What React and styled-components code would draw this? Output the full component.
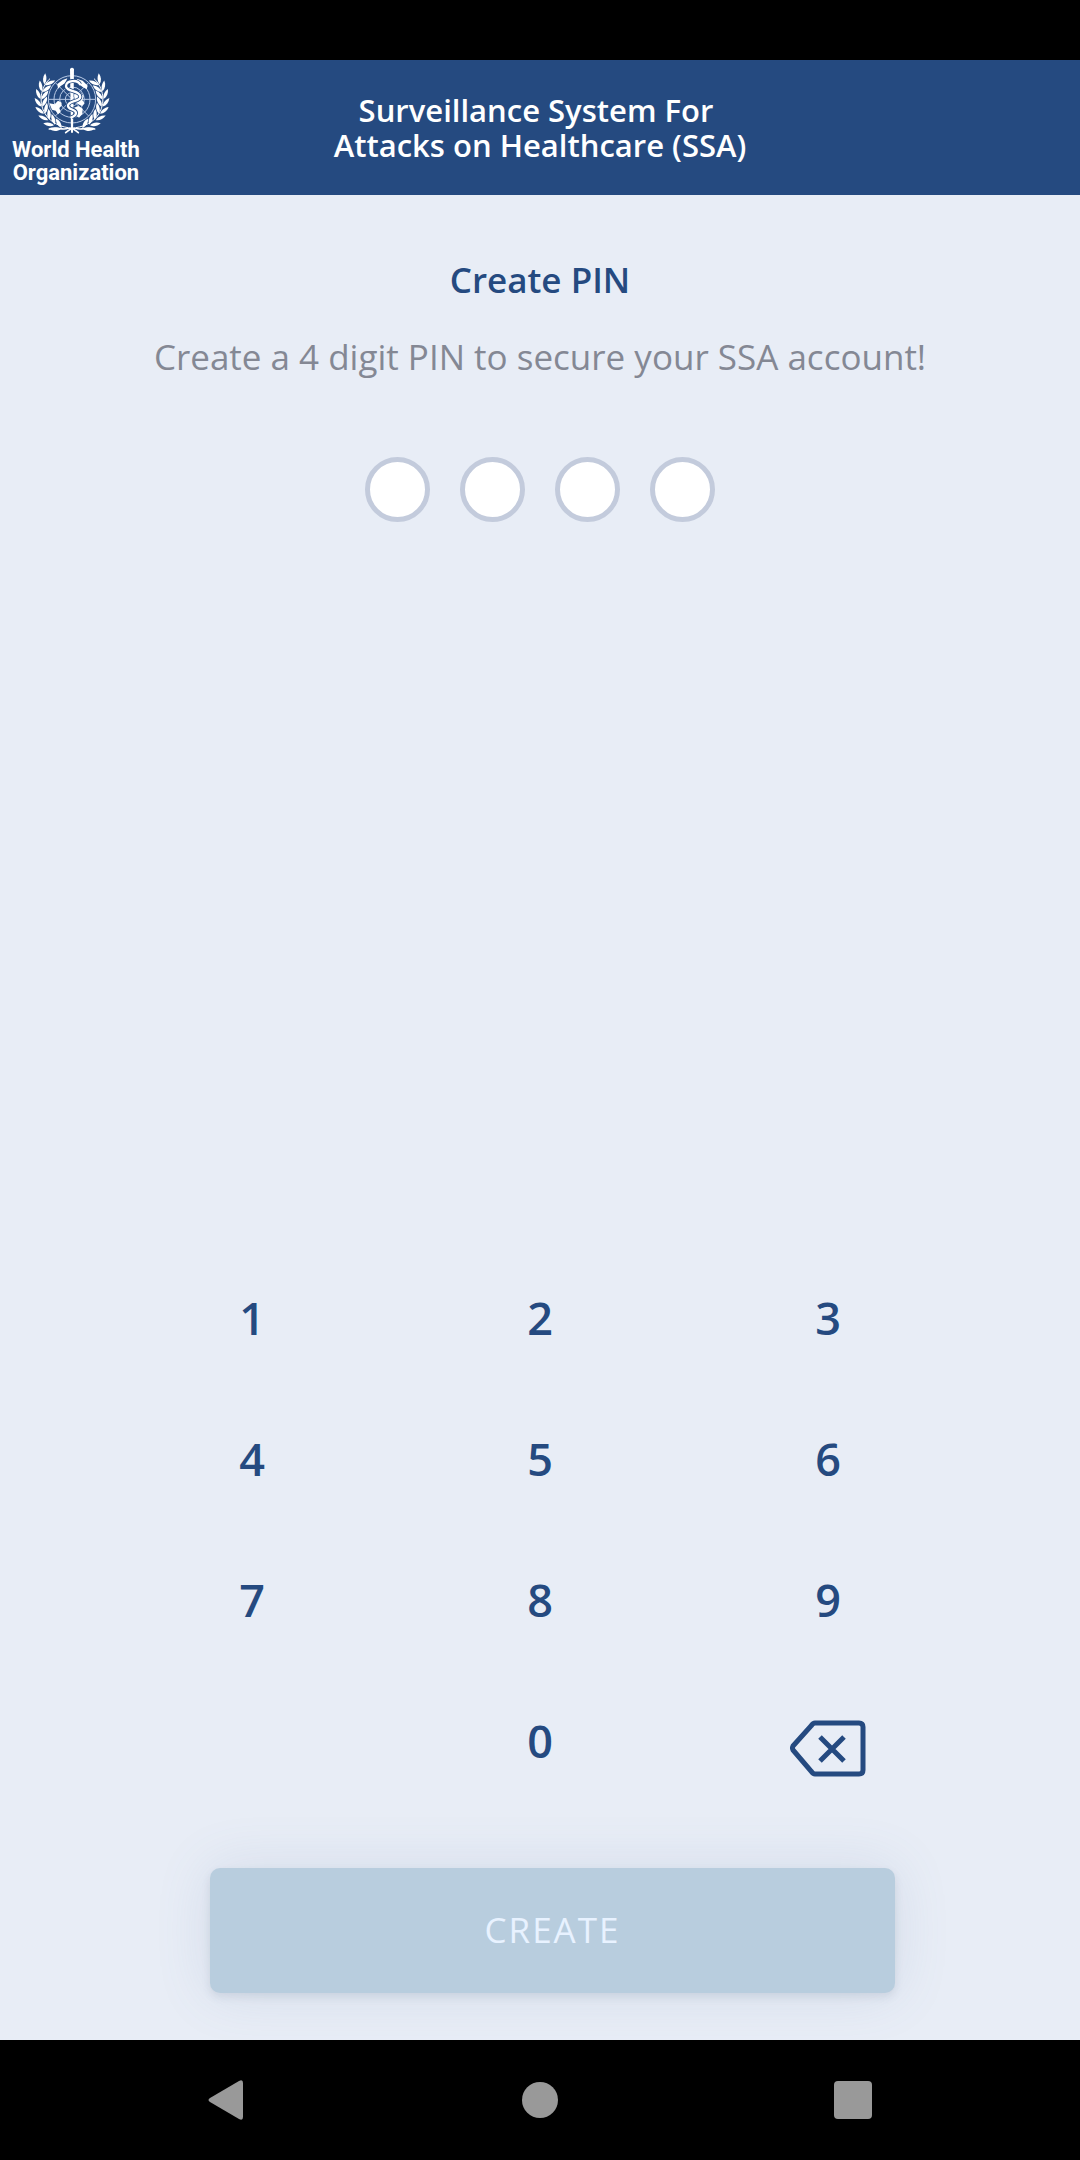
import React, { useState } from "react";
import styled, { createGlobalStyle } from "styled-components";

const colors = {
    darkblue: "#254a80",
    background: "#e8edf6",
    grey: "#848894",
    ring: "#c3cbdc",
    button: "#b8cdde",
    nav: "#999999"
};

const PIN_LENGTH = 4;
const DIGITS = ["1", "2", "3", "4", "5", "6", "7", "8", "9", "0"];

const GlobalStyle = createGlobalStyle`
    * {
        box-sizing: border-box;
    }

    body {
        margin: 0;
        font-family: "Open Sans", "Noto Sans", sans-serif;
    }
`;

const StyledScreen = styled.div`
    display: flex;
    flex-direction: column;
    min-height: 100vh;
    background: ${colors.background};
`;

const StyledStatusBar = styled.div`
    height: 60px;
    background: #000;
`;

const StyledHeader = styled.header`
    display: grid;
    grid-template-columns: 1fr auto 1fr;
    align-items: center;
    min-height: 135px;
    padding: 0 12px;
    background: ${colors.darkblue};
    color: #fff;
`;

const StyledLogo = styled.div`
    display: flex;
    flex-direction: column;
    align-items: center;
    justify-self: start;
    padding-bottom: 5px;
`;

const StyledEmblem = styled.svg`
    width: 78px;
    height: 68px;
    margin: 0 8px 4px 0;
`;

const StyledLogoText = styled.span`
    font-family: Roboto, "Liberation Sans", sans-serif;
    font-size: 22px;
    font-weight: 700;
    line-height: 23px;
    white-space: nowrap;
`;

const StyledTitle = styled.h1`
    margin: 0;
    font-size: 31px;
    font-weight: 600;
    line-height: 35px;
    text-align: center;
    white-space: pre;
`;

const StyledMain = styled.main`
    display: flex;
    flex: 1;
    flex-direction: column;
    align-items: center;
    padding: 61px 0 47px;
`;

const StyledHeading = styled.h2`
    margin: 0 0 29px;
    color: ${colors.darkblue};
    font-size: 35px;
    font-weight: 600;
    line-height: 48px;
`;

const StyledHint = styled.p`
    margin: 0 0 76px;
    color: ${colors.grey};
    font-size: 35px;
    line-height: 48px;
    text-align: center;
`;

const StyledPin = styled.div`
    display: flex;
    gap: 30px;
`;

const StyledPinBox = styled.input`
    width: 65px;
    height: 65px;
    padding: 0;
    border: 5px solid ${colors.ring};
    border-radius: 50%;
    outline: none;
    background: #fff;
    color: ${colors.darkblue};
    font-size: 35px;
    text-align: center;
`;

const StyledKeypad = styled.div`
    display: grid;
    grid-template-columns: repeat(3, 1fr);
    grid-auto-rows: 141px;
    width: 80%;
    margin-top: auto;
`;

const StyledKey = styled.button`
    display: flex;
    align-items: center;
    justify-content: center;
    grid-column: ${({ $column }) => $column || "auto"};
    padding: ${({ $icon }) => ($icon ? "16px 0 0" : "0")};
    border: none;
    background: none;
    color: ${colors.darkblue};
    font-family: inherit;
    font-size: 45px;
    font-weight: 600;
    cursor: pointer;
`;

const StyledCreateButton = styled.button`
    width: 685px;
    max-width: 80%;
    height: 125px;
    margin: 57px 0 0 25px;
    padding: 0 0 2px;
    border: none;
    border-radius: 10px;
    background: ${colors.button};
    box-shadow: 0 4px 8px rgba(60, 80, 110, 0.12), 0 0 56px rgba(90, 120, 160, 0.14);
    color: #e8f2ff;
    font-family: inherit;
    font-size: 35px;
    letter-spacing: 2px;
`;

const StyledNavBar = styled.nav`
    display: grid;
    grid-template-columns: repeat(3, 1fr);
    height: 120px;
    padding: 0 71px;
    background: #000;
`;

const StyledNavButton = styled.button`
    display: flex;
    align-items: center;
    justify-content: center;
    padding: 0;
    border: none;
    background: none;
    color: ${colors.nav};
`;

const leafAngles = [-62, -48, -34, -20, -6, 8, 22, 36];

const snake = "M242 101C235 86 201 88 200 106C199 124 243 119 243 138C243 154 206 149 206 165C206 179 230 174 230 187C230 195 222 197 217 200";

function Wreath() {
    return (
        <g>
            <path d="M152 84C124 108 114 160 142 196C156 214 176 226 206 231" fill="none" stroke="#fff" strokeWidth="3" />
            {leafAngles.map(angle => (
                <g key={angle} transform={`rotate(${angle} 218 146)`}>
                    <path d="M124 158C113 153 107 143 107 130C118 136 125 146 124 158Z" fill="#fff" />
                    <path d="M127 159C126 147 132 137 144 130C145 143 139 153 127 159Z" fill="#fff" />
                </g>
            ))}
        </g>
    );
}

function Emblem() {
    return (
        <StyledEmblem viewBox="101 46 234 204" aria-hidden="true">
            <g fill="none" stroke="#b9cae6" strokeWidth="3">
                <circle cx="218" cy="146" r="71" />
                <circle cx="218" cy="146" r="54" />
                <circle cx="218" cy="146" r="37" />
                <circle cx="218" cy="146" r="20" />
                <path d="M147 146H289M168 96L268 196M268 96L168 196" />
            </g>
            <g fill="#fff">
                <path d="M150 158L166 161L176 150L187 156L186 166L180 172L184 184L176 191L169 180L158 177Z" />
                <path d="M224 132L232 123L245 126L253 137L249 149L256 158L247 166L236 160L227 151Z" />
                <path d="M224 171L237 166L250 174L249 190L239 201L229 193Z" />
                <path d="M174 100L190 88L204 83L198 96L184 106L176 114Z" />
                <path d="M232 84L250 90L265 105L262 116L249 108L236 98Z" />
            </g>
            <path d="M212 55Q218 48 224 55L221 246H215Z" fill="#fff" />
            <path d={snake} fill="none" stroke={colors.darkblue} strokeWidth="12" />
            <path d={snake} fill="none" stroke="#fff" strokeWidth="7" strokeLinecap="round" />
            <Wreath />
            <g transform="translate(436 0) scale(-1 1)">
                <Wreath />
            </g>
            <g fill="none" stroke="#fff" strokeWidth="5" strokeLinecap="round">
                <path d="M150 235C174 227 188 240 206 233C217 229 227 237 237 246" />
                <path d="M286 235C262 227 248 240 230 233C219 229 209 237 199 246" />
            </g>
        </StyledEmblem>
    );
}

function BackspaceIcon() {
    return (
        <svg width="76" height="58" viewBox="0 0 76 58" fill="none" stroke="currentColor" aria-hidden="true">
            <path d="M25 3H69Q73 3 73 7V50Q73 54 69 54H25Q23 54 21 51L3 30Q2 28 3 26L21 6Q23 3 25 3Z" strokeWidth="5" />
            <path d="M30 17L54 41M54 17L30 41" strokeWidth="5" />
        </svg>
    );
}

function App() {

    const [pin, setPin] = useState("");

    const addDigit = digit => setPin(current => (current + digit).slice(0, PIN_LENGTH));
    const removeDigit = () => setPin(current => current.slice(0, -1));

    return (
        <>
            <GlobalStyle />
            <StyledScreen>
                <StyledStatusBar />
                <StyledHeader>
                    <StyledLogo>
                        <Emblem />
                        <StyledLogoText>World Health</StyledLogoText>
                        <StyledLogoText>Organization</StyledLogoText>
                    </StyledLogo>
                    <StyledTitle>{"Surveillance System For \nAttacks on Healthcare (SSA)"}</StyledTitle>
                </StyledHeader>
                <StyledMain>
                    <StyledHeading>Create PIN</StyledHeading>
                    <StyledHint>Create a 4 digit PIN to secure your SSA account!</StyledHint>
                    <StyledPin>
                        {Array.from({ length: PIN_LENGTH }, (_, i) => (
                            <StyledPinBox
                                key={i}
                                type="password"
                                readOnly
                                value={pin[i] || ""}
                                aria-label={`PIN digit ${i + 1}`}
                            />
                        ))}
                    </StyledPin>
                    <StyledKeypad>
                        {DIGITS.map(digit => (
                            <StyledKey
                                key={digit}
                                type="button"
                                $column={digit === "0" ? 2 : undefined}
                                onClick={() => addDigit(digit)}
                            >
                                {digit}
                            </StyledKey>
                        ))}
                        <StyledKey type="button" $icon aria-label="Delete" onClick={removeDigit}>
                            <BackspaceIcon />
                        </StyledKey>
                    </StyledKeypad>
                    <StyledCreateButton type="button" disabled={pin.length < PIN_LENGTH}>CREATE</StyledCreateButton>
                </StyledMain>
                <StyledNavBar>
                    <StyledNavButton type="button" aria-label="Back">
                        <svg width="38" height="42" viewBox="0 0 38 42" fill="currentColor">
                            <path d="M2 19L31 2Q35 0 35 4V38Q35 42 31 40L2 23Q-1 21 2 19Z" />
                        </svg>
                    </StyledNavButton>
                    <StyledNavButton type="button" aria-label="Home">
                        <svg width="36" height="36" viewBox="0 0 36 36" fill="currentColor">
                            <circle cx="18" cy="18" r="18" />
                        </svg>
                    </StyledNavButton>
                    <StyledNavButton type="button" aria-label="Recent apps">
                        <svg width="38" height="38" viewBox="0 0 38 38" fill="currentColor">
                            <rect width="38" height="38" rx="4" />
                        </svg>
                    </StyledNavButton>
                </StyledNavBar>
            </StyledScreen>
        </>
    );
}

export default App;
